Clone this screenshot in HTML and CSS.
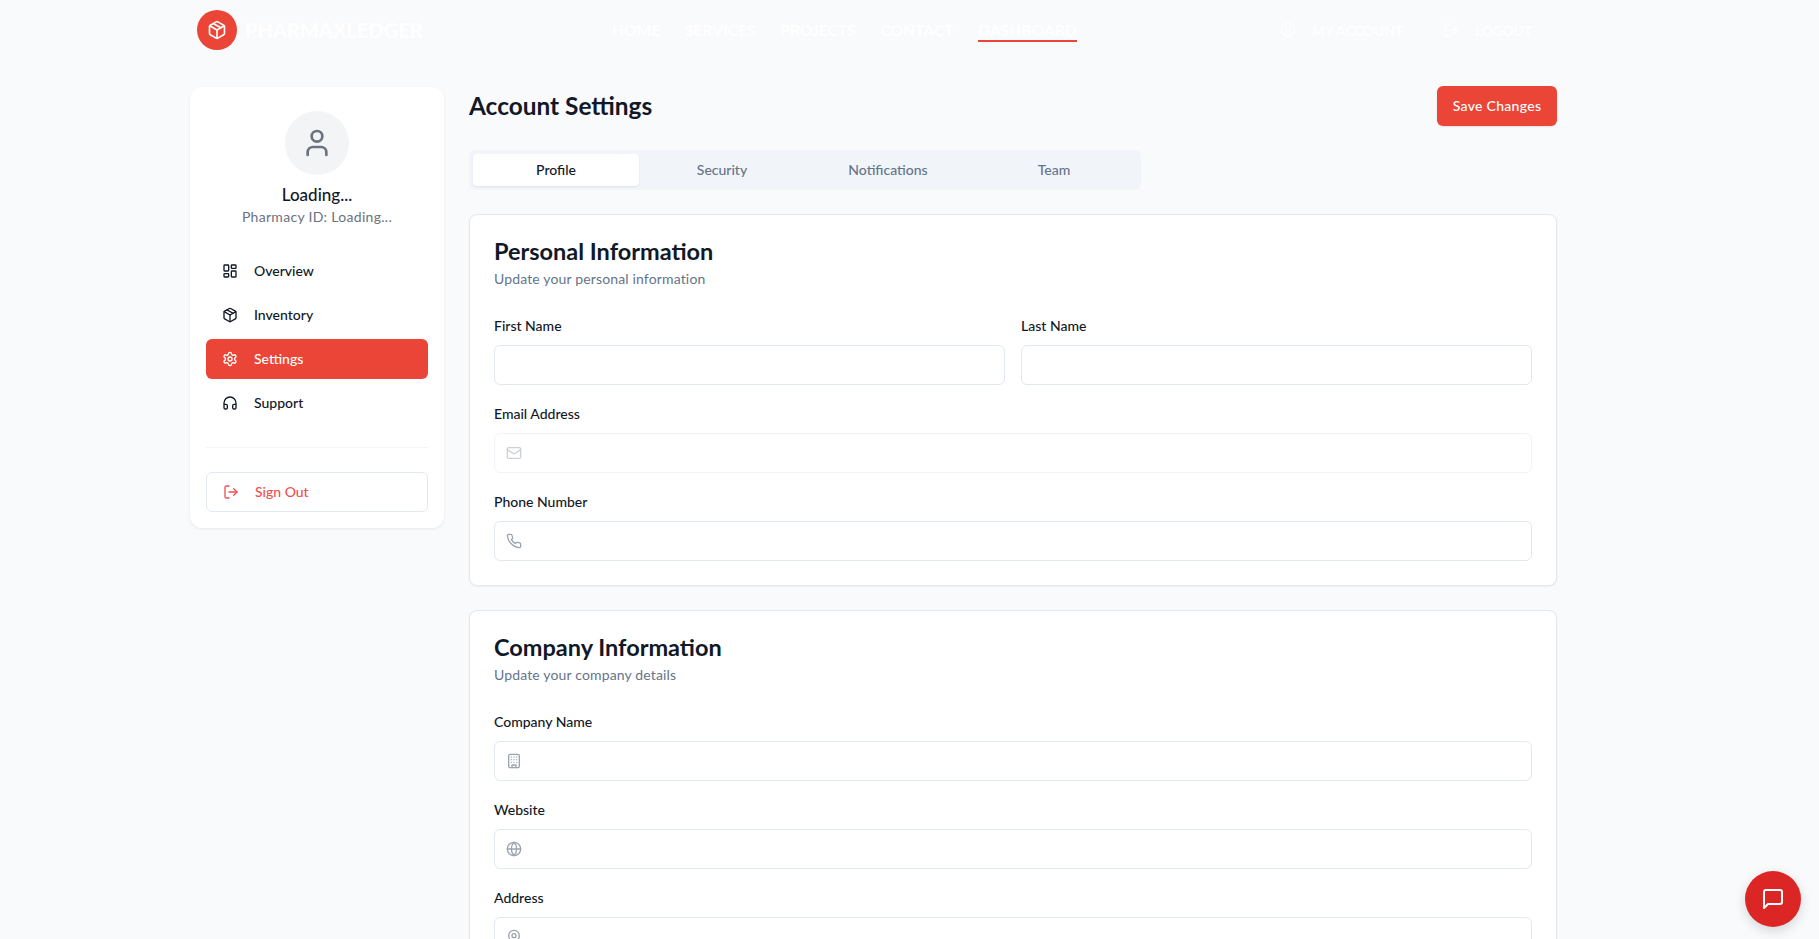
FILE: index.html
```html
<!doctype html>
<html>
 <head>
  <title>Account Settings</title>
  <link rel="stylesheet" href="styles.css">
 </head>
 <body>
  <svg class="sprite" xmlns="http://www.w3.org/2000/svg">
   <symbol id="i-package" viewBox="0 0 24 24"><path d="M16.5 9.4 7.55 4.24"/><path d="M21 16V8a2 2 0 0 0-1-1.73l-7-4a2 2 0 0 0-2 0l-7 4A2 2 0 0 0 3 8v8a2 2 0 0 0 1 1.73l7 4a2 2 0 0 0 2 0l7-4A2 2 0 0 0 21 16z"/><polyline points="3.29 7 12 12 20.71 7"/><line x1="12" y1="22" x2="12" y2="12"/></symbol>
   <symbol id="i-user" viewBox="0 0 24 24"><path d="M19 21v-2a4 4 0 0 0-4-4H9a4 4 0 0 0-4 4v2"/><circle cx="12" cy="7" r="4"/></symbol>
   <symbol id="i-account" viewBox="0 0 24 24"><circle cx="12" cy="12" r="10"/><circle cx="12" cy="10" r="3"/><path d="M7 20.662V19a2 2 0 0 1 2-2h6a2 2 0 0 1 2 2v1.662"/></symbol>
   <symbol id="i-logout" viewBox="0 0 24 24"><path d="M9 21H5a2 2 0 0 1-2-2V5a2 2 0 0 1 2-2h4"/><polyline points="16 17 21 12 16 7"/><line x1="21" y1="12" x2="9" y2="12"/></symbol>
   <symbol id="i-dashboard" viewBox="0 0 24 24"><rect x="3" y="3" width="7" height="9" rx="1"/><rect x="14" y="3" width="7" height="5" rx="1"/><rect x="14" y="12" width="7" height="9" rx="1"/><rect x="3" y="16" width="7" height="5" rx="1"/></symbol>
   <symbol id="i-settings" viewBox="0 0 24 24"><path d="M12.22 2h-.44a2 2 0 0 0-2 2v.18a2 2 0 0 1-1 1.73l-.43.25a2 2 0 0 1-2 0l-.15-.08a2 2 0 0 0-2.73.73l-.22.38a2 2 0 0 0 .73 2.73l.15.1a2 2 0 0 1 1 1.72v.51a2 2 0 0 1-1 1.74l-.15.09a2 2 0 0 0-.73 2.73l.22.38a2 2 0 0 0 2.73.73l.15-.08a2 2 0 0 1 2 0l.43.25a2 2 0 0 1 1 1.73V20a2 2 0 0 0 2 2h.44a2 2 0 0 0 2-2v-.18a2 2 0 0 1 1-1.73l.43-.25a2 2 0 0 1 2 0l.15.08a2 2 0 0 0 2.73-.73l.22-.39a2 2 0 0 0-.73-2.73l-.15-.08a2 2 0 0 1-1-1.74v-.5a2 2 0 0 1 1-1.74l.15-.09a2 2 0 0 0 .73-2.73l-.22-.38a2 2 0 0 0-2.73-.73l-.15.08a2 2 0 0 1-2 0l-.43-.25a2 2 0 0 1-1-1.73V4a2 2 0 0 0-2-2z"/><circle cx="12" cy="12" r="3"/></symbol>
   <symbol id="i-headphones" viewBox="0 0 24 24"><path d="M3 14h3a2 2 0 0 1 2 2v3a2 2 0 0 1-2 2H5a2 2 0 0 1-2-2v-7a9 9 0 0 1 18 0v7a2 2 0 0 1-2 2h-1a2 2 0 0 1-2-2v-3a2 2 0 0 1 2-2h3"/></symbol>
   <symbol id="i-mail" viewBox="0 0 24 24"><rect x="2" y="4" width="20" height="16" rx="2"/><path d="m22 7-8.97 5.7a1.94 1.94 0 0 1-2.06 0L2 7"/></symbol>
   <symbol id="i-phone" viewBox="0 0 24 24"><path d="M22 16.92v3a2 2 0 0 1-2.18 2 19.79 19.79 0 0 1-8.63-3.07 19.5 19.5 0 0 1-6-6 19.79 19.79 0 0 1-3.07-8.67A2 2 0 0 1 4.11 2h3a2 2 0 0 1 2 1.72 12.84 12.84 0 0 0 .7 2.81 2 2 0 0 1-.45 2.11L8.09 9.91a16 16 0 0 0 6 6l1.27-1.27a2 2 0 0 1 2.11-.45 12.84 12.84 0 0 0 2.81.7A2 2 0 0 1 22 16.92z"/></symbol>
   <symbol id="i-building" viewBox="0 0 24 24"><rect x="4" y="2" width="16" height="20" rx="2"/><path d="M9 22v-4h6v4"/><path d="M8 6h.01M12 6h.01M16 6h.01M8 10h.01M12 10h.01M16 10h.01M8 14h.01M12 14h.01M16 14h.01"/></symbol>
   <symbol id="i-globe" viewBox="0 0 24 24"><circle cx="12" cy="12" r="10"/><path d="M12 2a14.5 14.5 0 0 0 0 20 14.5 14.5 0 0 0 0-20"/><path d="M2 12h20"/></symbol>
   <symbol id="i-pin" viewBox="0 0 24 24"><path d="M20 10c0 6-8 12-8 12s-8-6-8-12a8 8 0 0 1 16 0Z"/><circle cx="12" cy="10" r="3"/></symbol>
   <symbol id="i-message" viewBox="0 0 24 24"><path d="M21 15a2 2 0 0 1-2 2H7l-4 4V5a2 2 0 0 1 2-2h14a2 2 0 0 1 2 2z"/></symbol>
  </svg>

  <!-- Top bar -->
  <header class="topbar">
   <a class="brand">
    <span class="brand-mark"><svg class="icon icon-20"><use href="#i-package"/></svg></span>
    <span class="brand-name">PHARMAXLEDGER</span>
   </a>
   <nav class="topnav">
    <a>HOME</a>
    <a>SERVICES</a>
    <a>PROJECTS</a>
    <a>CONTACT</a>
    <a class="current">DASHBOARD</a>
   </nav>
   <div class="topactions">
    <a class="account"><svg class="icon icon-16"><use href="#i-account"/></svg>MY ACCOUNT</a>
    <a class="logout"><svg class="icon icon-16"><use href="#i-logout"/></svg>LOGOUT</a>
   </div>
  </header>

  <div class="layout">
   <!-- Sidebar -->
   <aside class="sidebar">
    <div class="profile">
     <div class="avatar"><svg class="icon icon-32"><use href="#i-user"/></svg></div>
     <div class="profile-name">Loading...</div>
     <div class="profile-id">Pharmacy ID: Loading...</div>
    </div>
    <nav class="sidenav">
     <a class="sidelink"><svg class="icon icon-16"><use href="#i-dashboard"/></svg>Overview</a>
     <a class="sidelink"><svg class="icon icon-16"><use href="#i-package"/></svg>Inventory</a>
     <a class="sidelink active"><svg class="icon icon-16"><use href="#i-settings"/></svg>Settings</a>
     <a class="sidelink"><svg class="icon icon-16"><use href="#i-headphones"/></svg>Support</a>
    </nav>
    <div class="sidebar-foot">
     <button class="signout"><svg class="icon icon-16"><use href="#i-logout"/></svg>Sign Out</button>
    </div>
   </aside>

   <!-- Settings -->
   <main class="content">
    <div class="page-head">
     <h1>Account Settings</h1>
     <button class="save">Save Changes</button>
    </div>

    <div class="tabs">
     <button class="tab selected">Profile</button>
     <button class="tab">Security</button>
     <button class="tab">Notifications</button>
     <button class="tab">Team</button>
    </div>

    <section class="card">
     <h2>Personal Information</h2>
     <p class="card-sub">Update your personal information</p>
     <div class="field-row">
      <div class="field">
       <label>First Name</label>
       <div class="control"><input></div>
      </div>
      <div class="field">
       <label>Last Name</label>
       <div class="control"><input></div>
      </div>
     </div>
     <div class="field">
      <label>Email Address</label>
      <div class="control has-icon disabled"><svg class="icon icon-16"><use href="#i-mail"/></svg><input disabled></div>
     </div>
     <div class="field">
      <label>Phone Number</label>
      <div class="control has-icon"><svg class="icon icon-16"><use href="#i-phone"/></svg><input></div>
     </div>
    </section>

    <section class="card">
     <h2>Company Information</h2>
     <p class="card-sub">Update your company details</p>
     <div class="field">
      <label>Company Name</label>
      <div class="control has-icon"><svg class="icon icon-16"><use href="#i-building"/></svg><input></div>
     </div>
     <div class="field">
      <label>Website</label>
      <div class="control has-icon"><svg class="icon icon-16"><use href="#i-globe"/></svg><input></div>
     </div>
     <div class="field">
      <label>Address</label>
      <div class="control has-icon"><svg class="icon icon-16"><use href="#i-pin"/></svg><input></div>
     </div>
    </section>
   </main>
  </div>

  <button class="chat"><svg class="icon icon-24"><use href="#i-message"/></svg></button>
 </body>
</html>
```

FILE: styles.css
```css
* {
  box-sizing: border-box;
}

body {
  margin: 0;
  background-color: #f9fafc;
  color: #111827;
  font-family: Lato, sans-serif;
  font-size: 14px;
}

.sprite {
  display: none;
}

.icon {
  fill: none;
  stroke: currentColor;
  stroke-width: 2;
  stroke-linecap: round;
  stroke-linejoin: round;
  flex: none;
}
.icon-16 { width: 16px; height: 16px; }
.icon-20 { width: 20px; height: 20px; }
.icon-24 { width: 24px; height: 24px; }
.icon-32 { width: 32px; height: 32px; }

/* Top bar */
.topbar {
  display: flex;
  align-items: center;
  height: 60px;
  padding-left: 197px;
  color: #fff;
}

.brand {
  display: flex;
  align-items: center;
  gap: 8px;
  width: 415px;
}

.brand-mark {
  display: flex;
  align-items: center;
  justify-content: center;
  width: 40px;
  height: 40px;
  border-radius: 50%;
  background-color: #ea4536;
}

.brand-name {
  font-size: 20px;
  font-weight: 700;
  letter-spacing: 0.1px;
}

.topnav {
  display: flex;
  gap: 24.5px;
  width: 668px;
}

.topnav a {
  position: relative;
  font-size: 15.5px;
  font-weight: 700;
  letter-spacing: 0.1px;
  line-height: 20px;
}

.topnav .current::after {
  content: "";
  position: absolute;
  left: 0;
  right: 0;
  bottom: -2px;
  height: 2px;
  background-color: #ea4536;
}

.topactions {
  display: flex;
}

.account, .logout {
  display: flex;
  align-items: center;
  gap: 16px;
  font-size: 13.7px;
  font-weight: 700;
}

.account {
  width: 163px;
}

/* Page layout */
.layout {
  display: grid;
  grid-template-columns: 254px 1088px;
  gap: 25px;
  align-items: start;
  margin: 27px 0 40px 190px;
}

/* Sidebar */
.sidebar {
  padding: 24px 16px 16px;
  background-color: #fff;
  border-radius: 12px;
  box-shadow: 0 1px 3px rgba(0, 0, 0, 0.08);
}

.profile {
  display: flex;
  flex-direction: column;
  align-items: center;
  margin-bottom: 24px;
}

.avatar {
  display: flex;
  align-items: center;
  justify-content: center;
  width: 64px;
  height: 64px;
  margin-bottom: 8px;
  border-radius: 50%;
  background-color: #f3f4f6;
  color: #6b7280;
}

.profile-name {
  font-size: 17px;
  font-weight: 500;
  line-height: 24px;
}

.profile-id {
  color: #6b7280;
  letter-spacing: 0.3px;
  line-height: 20px;
}

.sidenav {
  display: flex;
  flex-direction: column;
  gap: 4px;
}

.sidelink {
  display: flex;
  align-items: center;
  gap: 16px;
  height: 40px;
  padding: 0 0 2px 16px;
  border-radius: 6px;
  font-weight: 500;
}

.sidelink .icon, .signout .icon {
  margin-top: 2px;
}

.sidelink.active {
  background-color: #ea4536;
  color: #fff;
}

.sidebar-foot {
  margin-top: 24px;
  padding-top: 24px;
  border-top: 1px solid #f1f5f9;
}

.signout {
  display: flex;
  align-items: center;
  gap: 16px;
  width: 100%;
  height: 40px;
  padding: 0 0 2px 16px;
  background-color: #fff;
  border: 1px solid #e2e8f0;
  border-radius: 6px;
  color: #ef4f4f;
  font: inherit;
  font-weight: 500;
}

/* Settings */
.page-head {
  display: flex;
  align-items: center;
  justify-content: space-between;
  height: 40px;
  margin-top: -1px;
}

h1 {
  margin: 0 0 2px;
  font-size: 24.4px;
  font-weight: 700;
}

.save {
  width: 120px;
  height: 40px;
  padding: 0 0 2px;
  background-color: #ea4536;
  border: none;
  border-radius: 6px;
  box-shadow: 0 1px 2px rgba(0, 0, 0, 0.1);
  color: #fff;
  font: inherit;
  font-weight: 500;
  letter-spacing: 0.3px;
}

.tabs {
  display: flex;
  width: 672px;
  height: 40px;
  margin-top: 24px;
  padding: 4px;
  background-color: #f1f5f9;
  border-radius: 6px;
}

.tab {
  flex: 1;
  padding: 0 0 2px;
  background: none;
  border: none;
  border-radius: 4px;
  color: #64748b;
  font: inherit;
  font-weight: 500;
}

.tab.selected {
  background-color: #fff;
  color: #111827;
  box-shadow: 0 1px 2px rgba(0, 0, 0, 0.08);
}

.card {
  margin-top: 24px;
  padding: 24px;
  background-color: #fff;
  border: 1px solid #e2e8f0;
  border-radius: 8px;
  box-shadow: 0 1px 2px rgba(0, 0, 0, 0.05);
}

h2 {
  margin: 0;
  font-size: 23.5px;
  font-weight: 700;
  line-height: 24px;
}

.card-sub {
  margin: 6px 0 28px;
  color: #64748b;
  letter-spacing: 0.15px;
  line-height: 20px;
}

.field-row {
  display: grid;
  grid-template-columns: 1fr 1fr;
  gap: 16px;
}

.field {
  margin-bottom: 20px;
}

.card .field:last-child {
  margin-bottom: 0;
}

.field-row .field:last-child {
  margin-bottom: 20px;
}

label {
  display: block;
  margin-bottom: 10px;
  font-weight: 500;
  line-height: 18px;
}

.control {
  position: relative;
}

.control input {
  display: block;
  width: 100%;
  height: 40px;
  padding: 0 12px;
  background-color: #fff;
  border: 1px solid #e2e8f0;
  border-radius: 6px;
  outline: none;
}

.control .icon {
  position: absolute;
  left: 12px;
  top: 12px;
  color: #9ca3af;
}

.has-icon input {
  padding-left: 40px;
}

.disabled {
  opacity: 0.5;
}

/* Chat button */
.chat {
  position: fixed;
  right: 18px;
  bottom: 12px;
  display: flex;
  align-items: center;
  justify-content: center;
  width: 56px;
  height: 56px;
  background-color: #dc2626;
  border: none;
  border-radius: 50%;
  box-shadow: 0 4px 12px rgba(0, 0, 0, 0.15);
  color: #fff;
}
```
